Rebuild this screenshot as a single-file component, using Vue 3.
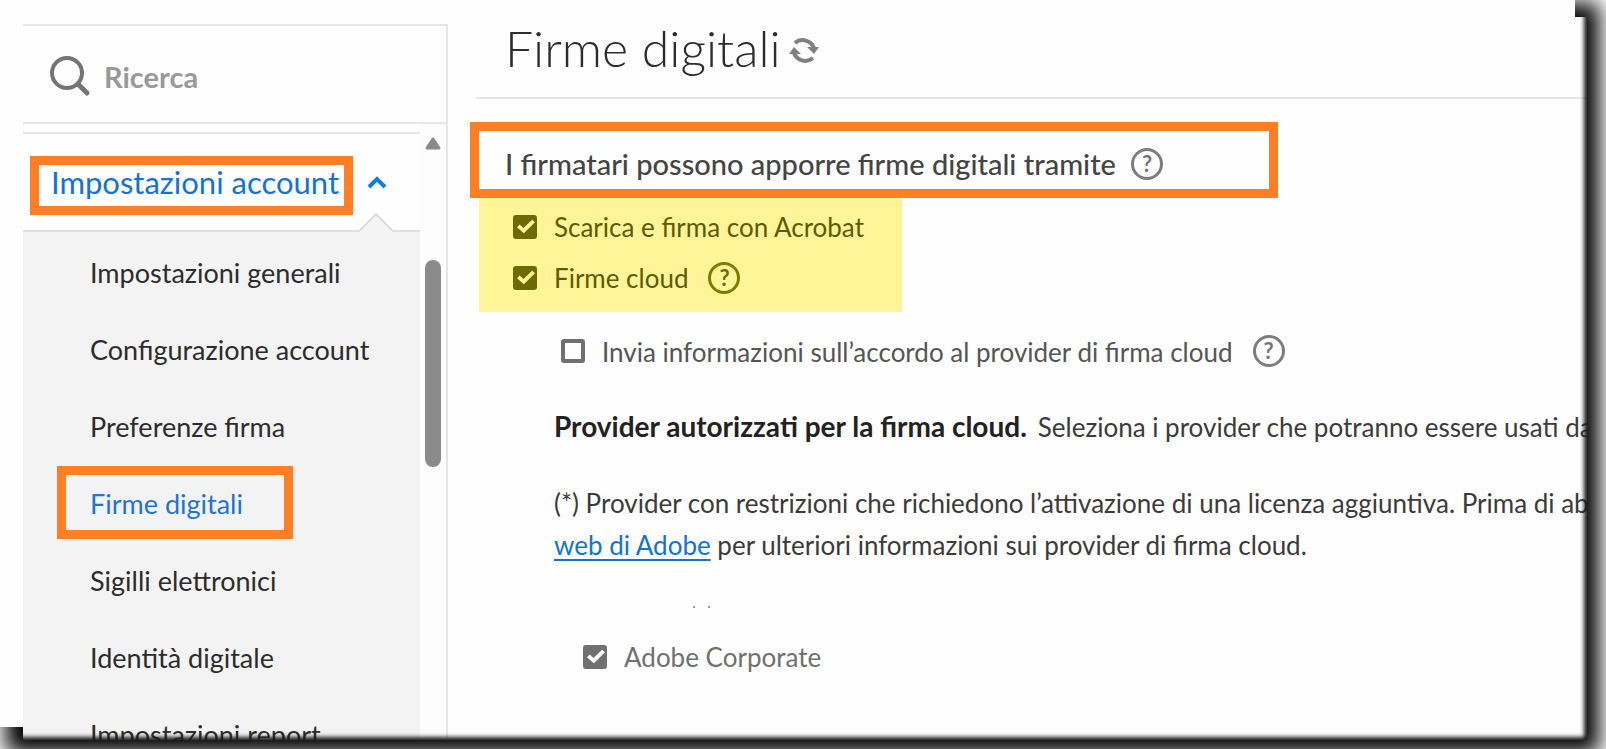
<script setup>
import { ref } from 'vue'

const menu = ref([
  { label: 'Impostazioni generali' },
  { label: 'Configurazione account' },
  { label: 'Preferenze firma' },
  { label: 'Firme digitali', active: true },
  { label: 'Sigilli elettronici' },
  { label: 'Identità digitale' },
  { label: 'Impostazioni report' },
])
const acrobat = ref(true)
const cloud = ref(true)
const sendInfo = ref(false)
const corporate = ref(true)
</script>

<template>
  <div class="page">
    <div class="page-shadow" aria-hidden="true"></div>
    <div class="sheet">
      <aside class="sidebar">
        <label class="search">
          <svg class="search-icon" viewBox="0 0 42 42" aria-hidden="true">
            <circle cx="18" cy="18" r="15" />
            <path d="M29 29 L38 38" class="handle" />
          </svg>
          <input type="text" placeholder="Ricerca" aria-label="Ricerca" />
        </label>
        <div class="scroll-area">
          <nav class="nav">
            <button class="section" type="button" aria-expanded="true">
              <span class="mark section-mark">Impostazioni account</span>
              <svg class="chevron" viewBox="0 0 20 13" aria-hidden="true"><path d="M2 11 L10 3 L18 11" /></svg>
              <svg class="notch" viewBox="0 0 36 19" aria-hidden="true">
                <path class="fill" d="M0 19 L1 18 L18 1 L35 18 L36 19 Z" />
                <path class="line" d="M0 18 L1 18 L18 1 L35 18 L36 18" />
              </svg>
            </button>
            <ul class="menu">
              <li v-for="item in menu" :key="item.label">
                <a href="#" :class="{ 'mark active': item.active }">{{ item.label }}</a>
              </li>
            </ul>
          </nav>
          <div class="track" aria-hidden="true">
            <svg class="track-arrow" viewBox="0 0 16 13"><path d="M8 2 L14 11 L2 11 Z" /></svg>
            <div class="thumb"></div>
          </div>
        </div>
      </aside>

      <main class="main">
        <header class="title-row">
          <h1>Firme digitali</h1>
          <button class="refresh" type="button" aria-label="Aggiorna">
            <svg viewBox="0 0 30 30" aria-hidden="true">
              <path class="arc" d="M6 7 A12 12 0 0 1 25 12" />
              <path class="arc" d="M24 22 A12 12 0 0 1 5 17" />
              <path class="tip" d="M18 11 L30 11 L25 18 Z" />
              <path class="tip" d="M0 18 L5 11 L12 18 Z" />
            </svg>
          </button>
        </header>

        <h2 class="mark question">
          I firmatari possono apporre firme digitali tramite
          <button class="help" type="button" aria-label="Guida">?</button>
        </h2>

        <div class="highlight">
          <div class="option">
            <input id="acrobat" v-model="acrobat" type="checkbox" />
            <label for="acrobat">Scarica e firma con Acrobat</label>
          </div>
          <div class="option">
            <input id="cloud" v-model="cloud" type="checkbox" />
            <label for="cloud">Firme cloud</label>
            <button class="help" type="button" aria-label="Guida">?</button>
          </div>
        </div>

        <div class="option nested">
          <input id="info" v-model="sendInfo" type="checkbox" />
          <label for="info">Invia informazioni sull’accordo al provider di firma cloud</label>
          <button class="help" type="button" aria-label="Guida">?</button>
        </div>

        <p class="providers"><strong>Provider autorizzati per la firma cloud.</strong><span>Seleziona i provider che potranno essere usati da</span></p>

        <p class="note">
          (*) Provider con restrizioni che richiedono l’attivazione di una licenza aggiuntiva. Prima di abi<br />
          <a href="#">web di Adobe</a> per ulteriori informazioni sui provider di firma cloud.
        </p>

        <div class="dots" aria-hidden="true"><i></i><i></i></div>

        <div class="option corporate">
          <input id="corporate" v-model="corporate" type="checkbox" />
          <label for="corporate">Adobe Corporate</label>
        </div>
      </main>
    </div>
    <div class="edge" aria-hidden="true"></div>
  </div>
</template>

<style>
body {
  margin: 0;
  background: #fff;
}
</style>

<style scoped>
* {
  box-sizing: border-box;
}
.page {
  position: relative;
  height: 100vh;
  overflow: hidden;
  background: #fff;
  color: #3b3b3b;
  font-family: Lato, "Open Sans", sans-serif;
  font-size: 26px;
  line-height: 42px;
}
.page-shadow {
  position: absolute;
  inset: 43px 47px 36px 46px;
  box-shadow: 0 0 20px 40px #000;
}
.sheet {
  position: relative;
  display: flex;
  height: calc(100vh - 9px);
  margin-right: 19px;
  padding-left: 23px;
  background: #fefefe;
  clip-path: polygon(0 0, calc(100% - 12px) 0, calc(100% - 12px) 17px, 100% 17px, 100% 100%, 23px 100%, 23px calc(100% - 13px), 0 calc(100% - 13px));
  overflow: hidden;
}
.edge {
  position: absolute;
  inset: 11px 19px 9px 17px;
  box-shadow: inset -3px -3px 4px #1a1a1a;
  clip-path: inset(6px 0 0 6px);
  pointer-events: none;
}
button {
  padding: 0;
  border: 0;
  background: none;
  color: inherit;
  font: inherit;
}
svg {
  display: block;
  fill: none;
}
.mark {
  border: 9px solid #ff7f27;
}

.sidebar {
  flex: none;
  display: flex;
  flex-direction: column;
  width: 425px;
  margin-top: 24px;
  border-top: 2px solid #e6e6e6;
  border-right: 2px solid #e6e6e6;
}
.search {
  flex: none;
  display: flex;
  align-items: center;
  gap: 13px;
  height: 98px;
  padding: 4px 24px 0 26px;
  border-bottom: 2px solid #e6e6e6;
}
.search-icon {
  flex: none;
  width: 42px;
  height: 42px;
  stroke: #757575;
  stroke-width: 4;
}
.handle {
  stroke-width: 5;
  stroke-linecap: round;
}
.search input {
  min-width: 0;
  width: 100%;
  padding: 2px 0 0;
  border: 0;
  outline: 0;
  background: none;
  color: #999;
  font: inherit;
  font-size: 29px;
  font-weight: 700;
}
.search input::placeholder {
  color: #999;
  opacity: 1;
}
.scroll-area {
  flex: 1;
  display: flex;
  min-height: 0;
}
.nav {
  flex: 1;
  margin-top: 8px;
  border-top: 2px solid #e6e6e6;
}
.section {
  position: relative;
  display: flex;
  align-items: center;
  gap: 14px;
  width: 100%;
  height: 98px;
  padding: 7px 0 0 7px;
  border-bottom: 2px solid #dedede;
  color: #1473d0;
  font-size: 31px;
  text-align: left;
}
.section-mark {
  width: 323px;
  height: 59px;
  padding-left: 12px;
  line-height: 34px;
  white-space: nowrap;
}
.chevron {
  width: 20px;
  height: 13px;
  margin-bottom: 6px;
  stroke: #0d7fdc;
  stroke-width: 4;
}
.notch {
  position: absolute;
  right: 26px;
  bottom: -2px;
  width: 36px;
  height: 19px;
}
.notch .fill {
  fill: #f3f3f3;
}
.notch .line {
  stroke: #dedede;
  stroke-width: 2;
}
.menu {
  margin: 0;
  padding: 2px 0 0;
  background: #f3f3f3;
  list-style: none;
}
.menu li {
  display: flex;
  align-items: center;
  height: 77px;
  padding-left: 34px;
}
.menu a {
  padding: 0 33px;
  color: #2c2c2c;
  font-size: 27px;
  text-decoration: none;
  white-space: nowrap;
}
.menu .active {
  width: 236px;
  height: 73px;
  margin-bottom: 2px;
  padding: 0 0 0 24px;
  color: #1f75cf;
  line-height: 57px;
}
.track {
  width: 26px;
  padding: 13px 5px 0;
  background: #fcfcfc;
}
.track-arrow {
  width: 16px;
  height: 13px;
  fill: #8a8a8a;
  stroke: #8a8a8a;
  stroke-width: 3;
  stroke-linejoin: round;
}
.thumb {
  height: 207px;
  margin-top: 110px;
  border-radius: 8px;
  background: #8a8a8a;
}

.main {
  flex: 1;
  min-width: 0;
  padding-left: 21px;
  white-space: nowrap;
}
.title-row {
  display: flex;
  align-items: center;
  gap: 8px;
  height: 99px;
  margin-left: 7px;
  padding: 0 0 2px 29px;
  border-bottom: 2px solid #e6e6e6;
}
h1 {
  margin: 0;
  color: #2c2c2c;
  font-size: 50px;
  font-weight: 300;
  line-height: 60px;
}
.refresh svg {
  width: 30px;
  height: 30px;
  margin-top: 6px;
}
.refresh .arc {
  stroke: #808080;
  stroke-width: 4;
}
.refresh .tip {
  fill: #808080;
}
.question {
  display: flex;
  align-items: center;
  gap: 15px;
  width: 808px;
  height: 76px;
  margin: 23px 0 0 1px;
  padding: 8px 0 0 26px;
  color: #444;
  font-size: 29px;
  font-weight: 500;
}
.help {
  flex: none;
  width: 32px;
  height: 32px;
  border: 3px solid #7d7d7d;
  border-radius: 50%;
  color: #757575;
  font-size: 22px;
  font-weight: 700;
  line-height: 26px;
  text-align: center;
}
.highlight {
  width: 423px;
  height: 114px;
  margin-left: 10px;
  padding: 3px 0 0 34px;
  border-radius: 2px;
  background: #fff598;
  color: #5d5a00;
}
.option {
  display: flex;
  align-items: center;
  height: 51px;
}
.option label {
  margin-left: 17px;
}
.option .help {
  margin-left: 20px;
}
.option input {
  flex: none;
  display: grid;
  place-items: center;
  appearance: none;
  width: 24px;
  height: 24px;
  margin: 0;
  border: 4px solid #707070;
  border-radius: 3px;
}
.option input:checked {
  background: #707070;
}
.option input:checked::after {
  content: "";
  width: 18px;
  height: 16px;
  background: #fff;
  clip-path: polygon(0 55%, 15% 38%, 36% 60%, 84% 8%, 100% 24%, 38% 92%);
}
.highlight input {
  border-color: #6d6a00;
}
.highlight input:checked {
  background: #6d6a00;
}
.highlight input:checked::after {
  background: #fff598;
}
.highlight .help {
  border-color: #7f7b00;
  color: #6d6a00;
}
.nested {
  margin: 13px 0 0 92px;
  color: #555;
}
.nested label {
  padding-top: 3px;
}
.providers {
  margin: 29px 0 0 85px;
}
.providers strong {
  margin-right: 11px;
  color: #222;
  font-size: 28px;
}
.note {
  margin: 34px 0 0 85px;
}
.note a {
  color: #1473d0;
  text-decoration-thickness: 2px;
  text-underline-offset: 4px;
}
.dots {
  display: flex;
  gap: 13px;
  margin: 40px 0 0 224px;
}
.dots i {
  width: 2px;
  height: 2px;
  background: #999;
}
.corporate {
  margin: 23px 0 0 114px;
  color: #707070;
}
</style>
